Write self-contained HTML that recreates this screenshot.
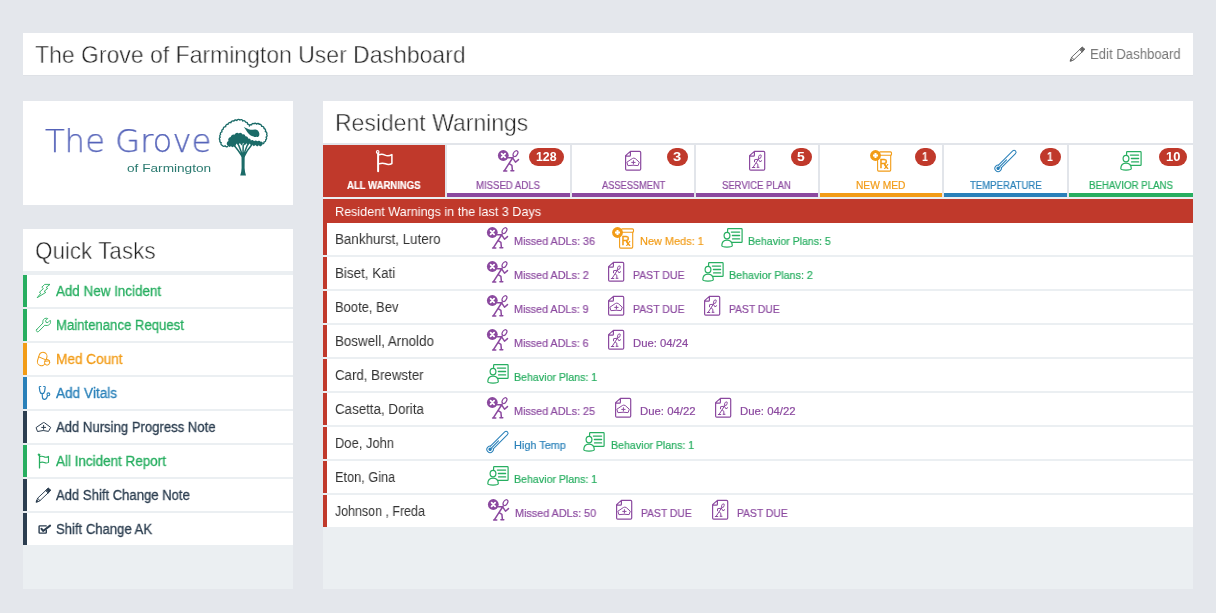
<!DOCTYPE html>
<html lang="en"><head><meta charset="utf-8"><title>The Grove of Farmington User Dashboard</title>
<style>
*{box-sizing:border-box;margin:0;padding:0}
html,body{width:1216px;height:613px;overflow:hidden}
body{background:#e4e7ec;font-family:"Liberation Sans",sans-serif;position:relative;color:#333}
.b{position:absolute}
.t{position:absolute;white-space:nowrap;line-height:1;transform-origin:0 0;display:block;will-change:transform}
.light{-webkit-text-stroke:0.5px #fff}
.med{-webkit-text-stroke:0.3px currentColor}
.wt,.tab{-webkit-text-stroke:0.2px currentColor}
.logo1{font-family:'DejaVu Sans',sans-serif;-webkit-text-stroke:0.25px currentColor}
svg.i{position:absolute;overflow:visible;will-change:transform}
</style></head><body>

<div class="b" style="left:23px;top:33px;width:1170px;height:42px;background:#fff;box-shadow:0 1px 0 rgba(0,0,0,.025)"></div>
<div class="b" style="left:23px;top:101px;width:270px;height:104px;background:#fff;"></div>
<div class="b" style="left:23px;top:229px;width:270px;height:360px;background:#ebeff2;"></div>
<div class="b" style="left:23px;top:229px;width:270px;height:42px;background:#fff;"></div>
<div class="b" style="left:23px;top:275px;width:270px;height:32px;background:#fff;border-left:4px solid #27ae60"></div>
<div class="b" style="left:23px;top:309px;width:270px;height:32px;background:#fff;border-left:4px solid #27ae60"></div>
<div class="b" style="left:23px;top:343px;width:270px;height:32px;background:#fff;border-left:4px solid #f29c17"></div>
<div class="b" style="left:23px;top:377px;width:270px;height:32px;background:#fff;border-left:4px solid #2980b9"></div>
<div class="b" style="left:23px;top:411px;width:270px;height:32px;background:#fff;border-left:4px solid #2c3e50"></div>
<div class="b" style="left:23px;top:445px;width:270px;height:32px;background:#fff;border-left:4px solid #27ae60"></div>
<div class="b" style="left:23px;top:479px;width:270px;height:32px;background:#fff;border-left:4px solid #2c3e50"></div>
<div class="b" style="left:23px;top:513px;width:270px;height:32px;background:#fff;border-left:4px solid #2c3e50"></div>
<div class="b" style="left:323px;top:101px;width:870px;height:488px;background:#ebeff2;"></div>
<div class="b" style="left:323px;top:101px;width:870px;height:42px;background:#fff;"></div>
<div class="b" style="left:323px;top:145px;width:122px;height:52px;background:#c0392b;"></div>
<div class="b" style="left:447px;top:145px;width:123px;height:52px;background:#fff;border-bottom:4px solid #8b499f"></div>
<div class="b" style="left:572px;top:145px;width:122px;height:52px;background:#fff;border-bottom:4px solid #8b499f"></div>
<div class="b" style="left:696px;top:145px;width:122px;height:52px;background:#fff;border-bottom:4px solid #8b499f"></div>
<div class="b" style="left:820px;top:145px;width:122px;height:52px;background:#fff;border-bottom:4px solid #f29c17"></div>
<div class="b" style="left:944px;top:145px;width:123px;height:52px;background:#fff;border-bottom:4px solid #2980b9"></div>
<div class="b" style="left:1069px;top:145px;width:124px;height:52px;background:#fff;border-bottom:4px solid #27ae60"></div>
<div class="b" style="left:323px;top:143px;width:870px;height:2px;background:#e2e5ea;"></div>
<div class="b" style="left:445px;top:145px;width:2px;height:52px;background:#e2e5ea;"></div>
<div class="b" style="left:570px;top:145px;width:2px;height:52px;background:#e2e5ea;"></div>
<div class="b" style="left:694px;top:145px;width:2px;height:52px;background:#e2e5ea;"></div>
<div class="b" style="left:818px;top:145px;width:2px;height:52px;background:#e2e5ea;"></div>
<div class="b" style="left:942px;top:145px;width:2px;height:52px;background:#e2e5ea;"></div>
<div class="b" style="left:1067px;top:145px;width:2px;height:52px;background:#e2e5ea;"></div>
<div class="b" style="left:323px;top:199px;width:870px;height:24px;background:#c0392b;"></div>
<div class="b" style="left:323px;top:223px;width:870px;height:32px;background:#fff;border-left:4px solid #c0392b"></div>
<div class="b" style="left:323px;top:257px;width:870px;height:32px;background:#fff;border-left:4px solid #c0392b"></div>
<div class="b" style="left:323px;top:291px;width:870px;height:32px;background:#fff;border-left:4px solid #c0392b"></div>
<div class="b" style="left:323px;top:325px;width:870px;height:32px;background:#fff;border-left:4px solid #c0392b"></div>
<div class="b" style="left:323px;top:359px;width:870px;height:32px;background:#fff;border-left:4px solid #c0392b"></div>
<div class="b" style="left:323px;top:393px;width:870px;height:32px;background:#fff;border-left:4px solid #c0392b"></div>
<div class="b" style="left:323px;top:427px;width:870px;height:32px;background:#fff;border-left:4px solid #c0392b"></div>
<div class="b" style="left:323px;top:461px;width:870px;height:32px;background:#fff;border-left:4px solid #c0392b"></div>
<div class="b" style="left:323px;top:495px;width:870px;height:32px;background:#fff;border-left:4px solid #c0392b"></div>
<div class="b" style="left:529px;top:148px;width:35px;height:18px;background:#c0392b;border-radius:9px"></div>
<div class="b" style="left:667px;top:148px;width:21px;height:18px;background:#c0392b;border-radius:9px"></div>
<div class="b" style="left:791px;top:148px;width:21px;height:18px;background:#c0392b;border-radius:9px"></div>
<div class="b" style="left:915px;top:148px;width:21px;height:18px;background:#c0392b;border-radius:9px"></div>
<div class="b" style="left:1040px;top:148px;width:21px;height:18px;background:#c0392b;border-radius:9px"></div>
<div class="b" style="left:1159px;top:148px;width:28px;height:18px;background:#c0392b;border-radius:9px"></div>
<span class="t light" style="left:35.00px;top:43.00px;font-size:24px;color:#1e1e1e;transform:scaleX(0.9579)">The Grove of Farmington User Dashboard</span>
<span class="t" style="left:1090.00px;top:47.00px;font-size:14px;color:#777;transform:scaleX(0.9390)">Edit Dashboard</span>
<span class="t light" style="left:335.00px;top:111.00px;font-size:24px;color:#1e1e1e;transform:scaleX(0.9574)">Resident Warnings</span>
<span class="t light" style="left:35.00px;top:239.00px;font-size:24px;color:#1e1e1e;transform:scaleX(0.9347)">Quick Tasks</span>
<span class="t logo1" style="left:45.00px;top:125.00px;font-size:32.5px;color:#5563b9;font-weight:200;transform:scaleX(0.9914)">The Grove</span>
<span class="t logo2" style="left:127.00px;top:163.00px;font-size:11.5px;color:#2b7a70;transform:scaleX(1.1864)">of Farmington</span>
<span class="t med" style="left:56.00px;top:284.00px;font-size:14px;color:#27ae60;transform:scaleX(0.9580)">Add New Incident</span>
<span class="t med" style="left:56.00px;top:318.00px;font-size:14px;color:#27ae60;transform:scaleX(0.9388)">Maintenance Request</span>
<span class="t med" style="left:56.00px;top:352.00px;font-size:14px;color:#f29c17;transform:scaleX(0.9723)">Med Count</span>
<span class="t med" style="left:56.00px;top:386.00px;font-size:14px;color:#2980b9;transform:scaleX(0.9727)">Add Vitals</span>
<span class="t med" style="left:56.00px;top:420.00px;font-size:14px;color:#2c3e50;transform:scaleX(0.9361)">Add Nursing Progress Note</span>
<span class="t med" style="left:56.00px;top:454.00px;font-size:14px;color:#27ae60;transform:scaleX(0.9614)">All Incident Report</span>
<span class="t med" style="left:56.00px;top:488.00px;font-size:14px;color:#2c3e50;transform:scaleX(0.9340)">Add Shift Change Note</span>
<span class="t med" style="left:56.00px;top:522.00px;font-size:14px;color:#2c3e50;transform:scaleX(0.9350)">Shift Change AK</span>
<span class="t" style="left:335.00px;top:205.00px;font-size:13px;color:#fff;transform:scaleX(0.9685)">Resident Warnings in the last 3 Days</span>
<span class="t" style="left:335.00px;top:232.00px;font-size:14px;color:#333;transform:scaleX(0.9558)">Bankhurst, Lutero</span>
<span class="t wt" style="left:514.00px;top:236.00px;font-size:11px;color:#8b499f;transform:scaleX(0.9809)">Missed ADLs: 36</span>
<span class="t wt" style="left:640.00px;top:236.00px;font-size:11px;color:#f29c17;transform:scaleX(0.9936)">New Meds: 1</span>
<span class="t wt" style="left:748.00px;top:236.00px;font-size:11px;color:#27ae60;transform:scaleX(0.9605)">Behavior Plans: 5</span>
<span class="t" style="left:335.00px;top:266.00px;font-size:14px;color:#333;transform:scaleX(0.9553)">Biset, Kati</span>
<span class="t wt" style="left:514.00px;top:270.00px;font-size:11px;color:#8b499f;transform:scaleX(0.9797)">Missed ADLs: 2</span>
<span class="t wt" style="left:633.00px;top:270.00px;font-size:11px;color:#8b499f;transform:scaleX(0.9527)">PAST DUE</span>
<span class="t wt" style="left:729.00px;top:270.00px;font-size:11px;color:#27ae60;transform:scaleX(0.9726)">Behavior Plans: 2</span>
<span class="t" style="left:335.00px;top:300.00px;font-size:14px;color:#333;transform:scaleX(0.9270)">Boote, Bev</span>
<span class="t wt" style="left:514.00px;top:304.00px;font-size:11px;color:#8b499f;transform:scaleX(0.9769)">Missed ADLs: 9</span>
<span class="t wt" style="left:633.00px;top:304.00px;font-size:11px;color:#8b499f;transform:scaleX(0.9527)">PAST DUE</span>
<span class="t wt" style="left:729.00px;top:304.00px;font-size:11px;color:#8b499f;transform:scaleX(0.9380)">PAST DUE</span>
<span class="t" style="left:335.00px;top:334.00px;font-size:14px;color:#333;transform:scaleX(0.9557)">Boswell, Arnoldo</span>
<span class="t wt" style="left:514.00px;top:338.00px;font-size:11px;color:#8b499f;transform:scaleX(0.9770)">Missed ADLs: 6</span>
<span class="t wt" style="left:633.00px;top:338.00px;font-size:11px;color:#8b499f;transform:scaleX(1.0273)">Due: 04/24</span>
<span class="t" style="left:335.00px;top:368.00px;font-size:14px;color:#333;transform:scaleX(0.9484)">Card, Brewster</span>
<span class="t wt" style="left:514.00px;top:372.00px;font-size:11px;color:#27ae60;transform:scaleX(0.9655)">Behavior Plans: 1</span>
<span class="t" style="left:335.00px;top:402.00px;font-size:14px;color:#333;transform:scaleX(0.9519)">Casetta, Dorita</span>
<span class="t wt" style="left:514.00px;top:406.00px;font-size:11px;color:#8b499f;transform:scaleX(0.9809)">Missed ADLs: 25</span>
<span class="t wt" style="left:640.00px;top:406.00px;font-size:11px;color:#8b499f;transform:scaleX(1.0322)">Due: 04/22</span>
<span class="t wt" style="left:740.00px;top:406.00px;font-size:11px;color:#8b499f;transform:scaleX(1.0322)">Due: 04/22</span>
<span class="t" style="left:335.00px;top:436.00px;font-size:14px;color:#333;transform:scaleX(0.9244)">Doe, John</span>
<span class="t wt" style="left:514.00px;top:440.00px;font-size:11px;color:#2980b9;transform:scaleX(0.9896)">High Temp</span>
<span class="t wt" style="left:611.00px;top:440.00px;font-size:11px;color:#27ae60;transform:scaleX(0.9655)">Behavior Plans: 1</span>
<span class="t" style="left:335.00px;top:470.00px;font-size:14px;color:#333;transform:scaleX(0.9110)">Eton, Gina</span>
<span class="t wt" style="left:514.00px;top:474.00px;font-size:11px;color:#27ae60;transform:scaleX(0.9655)">Behavior Plans: 1</span>
<span class="t" style="left:335.00px;top:504.00px;font-size:14px;color:#333;transform:scaleX(0.8881)">Johnson , Freda</span>
<span class="t wt" style="left:515.00px;top:508.00px;font-size:11px;color:#8b499f;transform:scaleX(0.9822)">Missed ADLs: 50</span>
<span class="t wt" style="left:641.00px;top:508.00px;font-size:11px;color:#8b499f;transform:scaleX(0.9380)">PAST DUE</span>
<span class="t wt" style="left:737.00px;top:508.00px;font-size:11px;color:#8b499f;transform:scaleX(0.9380)">PAST DUE</span>
<span class="t tab" style="left:347.00px;top:181.00px;font-size:10px;color:#fff;font-weight:700;transform:scaleX(0.9552)">ALL WARNINGS</span>
<span class="t tab" style="left:476.00px;top:181.00px;font-size:10px;color:#8b499f;transform:scaleX(0.9593)">MISSED ADLS</span>
<span class="t tab" style="left:602.00px;top:181.00px;font-size:10px;color:#8b499f;transform:scaleX(0.9268)">ASSESSMENT</span>
<span class="t tab" style="left:722.00px;top:181.00px;font-size:10px;color:#8b499f;transform:scaleX(0.9469)">SERVICE PLAN</span>
<span class="t tab" style="left:856.00px;top:181.00px;font-size:10px;color:#f29c17;transform:scaleX(1.0210)">NEW MED</span>
<span class="t tab" style="left:970.00px;top:181.00px;font-size:10px;color:#2980b9;transform:scaleX(0.9572)">TEMPERATURE</span>
<span class="t tab" style="left:1089.00px;top:181.00px;font-size:10px;color:#27ae60;transform:scaleX(0.9708)">BEHAVIOR PLANS</span>
<span class="t badge" style="left:536.00px;top:151.00px;font-size:12px;color:#fff;font-weight:700;transform:scaleX(1.0280)">128</span>
<span class="t badge" style="left:673.00px;top:151.00px;font-size:12px;color:#fff;font-weight:700;transform:scaleX(1.2285)">3</span>
<span class="t badge" style="left:797.00px;top:151.00px;font-size:12px;color:#fff;font-weight:700;transform:scaleX(1.1585)">5</span>
<span class="t badge" style="left:922.00px;top:151.00px;font-size:12px;color:#fff;font-weight:700;transform:scaleX(0.8842)">1</span>
<span class="t badge" style="left:1047.00px;top:151.00px;font-size:12px;color:#fff;font-weight:700;transform:scaleX(0.8842)">1</span>
<span class="t badge" style="left:1166.00px;top:151.00px;font-size:12px;color:#fff;font-weight:700;transform:scaleX(1.0783)">10</span>
<svg width="0" height="0" style="position:absolute"><defs>
<g id="adl" fill="none" stroke="currentColor" stroke-linecap="round" stroke-linejoin="round"><circle cx="9.3" cy="9.5" r="5.4" fill="currentColor" stroke="none"/>
<path d="M7.6 7.7 L11.1 11.4 M11.1 7.7 L7.6 11.4" stroke="#fff" stroke-width="1.8"/>
<ellipse cx="21.5" cy="7.6" rx="2" ry="3.2" transform="rotate(32 21.5 7.6)" stroke-width="1.2"/>
<path d="M14.5 11.8 H18.7 M19.2 11 L10.3 24.8 M9.6 25.1 H12.8 M18.8 12.2 L21.5 16.2 L24.5 13.6 M15.6 17.9 L17.9 19.3 L18.4 24.6 M16.9 24.7 H19.8" stroke-width="1.5"/></g>
<g id="doc" fill="none" stroke="currentColor" stroke-linecap="round" stroke-linejoin="round"><path d="M12.4 5.4 H21.6 Q22.7 5.4 22.7 6.5 V23.1 Q22.7 24.2 21.6 24.2 H8.7 Q7.6 24.2 7.6 23.1 V9.6 Z M12.4 5.4 V9.2 Q12.4 10.2 11.4 10.2 H7.7" stroke-width="1.2"/></g>
<g id="ass" fill="none" stroke="currentColor" stroke-linecap="round" stroke-linejoin="round"><use href="#doc"/><path d="M9.2 16 L14.4 12.5 Q15.8 11.7 17.2 12.5 L21.3 16.2 L20.1 19.6 Q15.2 18.9 10.3 19.6 Z M15.4 14.7 V18.1 M13.7 16.4 H17.1" stroke-width="1"/></g>
<g id="svc" fill="none" stroke="currentColor" stroke-linecap="round" stroke-linejoin="round"><use href="#doc"/><ellipse cx="17.9" cy="10.6" rx="1.2" ry="1.8" transform="rotate(25 17.9 10.6)" stroke-width="0.9"/>
<path d="M16.9 12.4 L11.2 21.2 M10.3 21.5 H12.8 M16.5 13.2 L12.6 13.7 L12.5 15.8 M16.5 13.4 L17.9 15.8 L19.7 14.7 M14.3 17 L15.8 18.2 L15.9 21.1 M15.1 21.3 H17" stroke-width="1"/></g>
<g id="med" fill="none" stroke="currentColor" stroke-linecap="round" stroke-linejoin="round"><rect x="13.4" y="5.9" width="12.1" height="3.4" rx="1" stroke-width="1.1"/>
<path d="M11.6 14 V24.1 Q11.6 25.1 12.6 25.1 H23.7 Q24.7 25.1 24.7 24.1 V9.4" stroke-width="1.1"/>
<circle cx="9.5" cy="9.5" r="5.4" fill="currentColor" stroke="none"/>
<path d="M9.5 7 V12 M7 9.5 H12" stroke="#fff" stroke-width="2" stroke-linecap="butt"/>
<text x="13.4" y="21.6" font-family="Liberation Sans,Arial,sans-serif" font-size="13.4" fill="currentColor" stroke="currentColor" stroke-width="0.55" textLength="8.2" lengthAdjust="spacingAndGlyphs">R</text>
<text x="17.7" y="22.8" font-family="Liberation Sans,Arial,sans-serif" font-size="9" font-weight="700" fill="currentColor" stroke="none">x</text></g>
<g id="temp" fill="none" stroke="currentColor" stroke-linecap="round" stroke-linejoin="round"><g transform="translate(8.1 22.3) rotate(-45)"><circle r="3.2" stroke-width="1" fill="#fff"/>
<path d="M2.5 -1.95 H22.6 a1.95 1.95 0 0 1 0 3.9 H2.5" stroke-width="1" fill="#fff"/>
<circle r="1.7" fill="currentColor" stroke="none"/><path d="M0 0 H11.8" stroke-width="1.1"/></g></g>
<g id="beh" fill="none" stroke="currentColor" stroke-linecap="round" stroke-linejoin="round"><path d="M10.6 8.6 V6.4 Q10.6 5.7 11.3 5.7 H24.4 Q25.1 5.7 25.1 6.4 V18.7 Q25.1 19.4 24.4 19.4 H15.2" stroke-width="1.2"/>
<path d="M14.4 9.1 H22.6 M15.4 12.5 H22.6 M15.6 15.9 H22.6" stroke-width="1.3"/>
<ellipse cx="10" cy="12.6" rx="2.9" ry="3.3" stroke-width="1.2"/>
<path d="M4.8 22.6 Q4.9 17.1 10 17.1 Q15.2 17.1 15.3 22.6 Q15.3 24.1 10 24.1 Q4.8 24.1 4.8 22.6 Z" stroke-width="1.2"/></g>
<g id="flagw" fill="none" stroke="currentColor" stroke-linecap="round" stroke-linejoin="round"><circle cx="8.7" cy="5.9" r="1.3" stroke-width="1.1"/><path d="M9.1 7.3 V25.3" stroke-width="2"/>
<path d="M9.8 8.9 C12.5 7.9 14 8.2 16 9.1 S20.5 9.9 22.9 8.6 V17.5 C20.5 19 18.5 18.7 16.5 17.8 S12.5 16.9 9.8 17.9" stroke-width="1.5"/></g>
<g id="bolt" fill="none" stroke="currentColor" stroke-linecap="round" stroke-linejoin="round"><path d="M12.1 3.4 H17 L13.1 6.5 L14.7 7.4 L11.1 10.4 L12.8 11.4 L4.2 16.7 L7.8 12.2 L6.4 11.3 L10.4 7.6 L9.1 6.5 Z" stroke-width="0.9"/></g>
<g id="wrench" fill="none" stroke="currentColor" stroke-linecap="round" stroke-linejoin="round"><path d="M3.9 14.3 L10 8 C9.6 6.3 9.9 4.6 11.6 3.6 C12.6 3.1 13.8 3.1 14.7 3.5 L12.6 5.6 L13 7.3 L14.9 7.6 L17.2 5.3 C17.9 6.7 17.6 8.3 16.5 9.4 C15.2 10.6 13.4 10.8 11.8 10.2 L5.8 16.3 C4.9 17.1 3.9 16.9 3.5 16.1 C3.2 15.5 3.4 14.8 3.9 14.3 Z" stroke-width="0.9"/></g>
<g id="pills" fill="none" stroke="currentColor" stroke-linecap="round" stroke-linejoin="round"><rect x="5.2" y="3.2" width="8" height="13.6" rx="4" transform="rotate(17 9.2 10)" stroke-width="1"/>
<path d="M5.8 7.9 L12.7 10.8" stroke-width="1"/><ellipse cx="14.1" cy="13.3" rx="2.6" ry="2.9" fill="#fff" stroke-width="1"/><path d="M12 12.3 L16.5 11.8" stroke-width="1"/></g>
<g id="steth" fill="none" stroke="currentColor" stroke-linecap="round" stroke-linejoin="round"><path d="M7.7 3.5 H6.9 Q6.2 3.6 6.3 4.4 L6.9 8.3 Q7.3 10.5 9.2 10.5 Q11.2 10.5 11.6 8.3 L12.2 4.4 Q12.3 3.6 11.6 3.5 H10.7 M9.2 10.5 L9.4 14 Q9.5 16.3 11.4 16.3 Q13.5 16.3 14.1 13.9 L14.5 12.8" stroke-width="1.2"/><circle cx="15.4" cy="11.3" r="1.4" stroke-width="1.1"/></g>
<g id="nurse" fill="none" stroke="currentColor" stroke-linecap="round" stroke-linejoin="round"><path d="M3.4 10.4 L10.2 5.7 Q10.8 5.3 11.4 5.7 L17.7 10.4 L15.5 14.4 Q10.3 12.6 4.9 14.4 Z M10.6 8.4 V12.3 M8.7 10.4 H12.6" stroke-width="1"/></g>
<g id="flag" fill="none" stroke="currentColor" stroke-linecap="round" stroke-linejoin="round"><circle cx="5.9" cy="3.7" r="0.9" fill="currentColor" stroke-width="0.6"/><path d="M6.5 4 V16.9" stroke-width="1.3"/>
<path d="M6.9 5.6 C8.7 4.9 9.7 5.1 11 5.8 S13.9 6.3 15.5 5.4 V11.4 C13.9 12.4 12.6 12.2 11.3 11.6 S8.7 10.9 6.9 11.6" stroke-width="1.1"/></g>
<g id="pencil" fill="none" stroke="currentColor" stroke-linecap="round" stroke-linejoin="round"><g transform="translate(3.3 16.8) rotate(-43.5)"><path d="M0 0 L3.4 -1.7 H17.4 Q18.3 -1.7 18.3 -0.8 V0.8 Q18.3 1.7 17.4 1.7 H3.4 Z M3.4 -1.7 V1.7 M14.6 -1.7 V1.7" stroke-width="0.9"/>
<path d="M0 0 L1.6 -0.8 V0.8 Z M15.4 -1.7 H17.4 Q18.3 -1.7 18.3 -0.8 V0.8 Q18.3 1.7 17.4 1.7 H15.4 Z" fill="currentColor" stroke-width="0.8"/></g></g>
<g id="check" fill="none" stroke="currentColor" stroke-linecap="round" stroke-linejoin="round"><path d="M13.2 6.9 H6.8 Q6.1 6.9 6.1 7.6 V13.4 Q6.1 14.1 6.8 14.1 H12.6 Q13.3 14.1 13.3 13.4 V11.3" stroke-width="1.4"/><path d="M8.4 9.7 L10.1 12 L17.1 6.6" stroke-width="2"/></g>
</defs></svg>
<svg class="i" style="left:483px;top:223px;color:#8b499f" width="30" height="30" viewBox="0 0 30 30"><use href="#adl"/></svg>
<svg class="i" style="left:608px;top:223px;color:#f29c17" width="30" height="30" viewBox="0 0 30 30"><use href="#med"/></svg>
<svg class="i" style="left:716.5px;top:223px;color:#27ae60" width="30" height="30" viewBox="0 0 30 30"><use href="#beh"/></svg>
<svg class="i" style="left:483px;top:257px;color:#8b499f" width="30" height="30" viewBox="0 0 30 30"><use href="#adl"/></svg>
<svg class="i" style="left:601.0px;top:257px;color:#8b499f" width="30" height="30" viewBox="0 0 30 30"><use href="#svc"/></svg>
<svg class="i" style="left:697.5px;top:257px;color:#27ae60" width="30" height="30" viewBox="0 0 30 30"><use href="#beh"/></svg>
<svg class="i" style="left:483px;top:291px;color:#8b499f" width="30" height="30" viewBox="0 0 30 30"><use href="#adl"/></svg>
<svg class="i" style="left:601.0px;top:291px;color:#8b499f" width="30" height="30" viewBox="0 0 30 30"><use href="#ass"/></svg>
<svg class="i" style="left:696.5px;top:291px;color:#8b499f" width="30" height="30" viewBox="0 0 30 30"><use href="#svc"/></svg>
<svg class="i" style="left:483px;top:325px;color:#8b499f" width="30" height="30" viewBox="0 0 30 30"><use href="#adl"/></svg>
<svg class="i" style="left:601.0px;top:325px;color:#8b499f" width="30" height="30" viewBox="0 0 30 30"><use href="#svc"/></svg>
<svg class="i" style="left:482.5px;top:359px;color:#27ae60" width="30" height="30" viewBox="0 0 30 30"><use href="#beh"/></svg>
<svg class="i" style="left:483px;top:393px;color:#8b499f" width="30" height="30" viewBox="0 0 30 30"><use href="#adl"/></svg>
<svg class="i" style="left:608.0px;top:393px;color:#8b499f" width="30" height="30" viewBox="0 0 30 30"><use href="#ass"/></svg>
<svg class="i" style="left:708.0px;top:393px;color:#8b499f" width="30" height="30" viewBox="0 0 30 30"><use href="#svc"/></svg>
<svg class="i" style="left:482px;top:427px;color:#2980b9" width="30" height="30" viewBox="0 0 30 30"><use href="#temp"/></svg>
<svg class="i" style="left:578.5px;top:427px;color:#27ae60" width="30" height="30" viewBox="0 0 30 30"><use href="#beh"/></svg>
<svg class="i" style="left:482.5px;top:461px;color:#27ae60" width="30" height="30" viewBox="0 0 30 30"><use href="#beh"/></svg>
<svg class="i" style="left:484px;top:495px;color:#8b499f" width="30" height="30" viewBox="0 0 30 30"><use href="#adl"/></svg>
<svg class="i" style="left:609.0px;top:495px;color:#8b499f" width="30" height="30" viewBox="0 0 30 30"><use href="#ass"/></svg>
<svg class="i" style="left:705.0px;top:495px;color:#8b499f" width="30" height="30" viewBox="0 0 30 30"><use href="#svc"/></svg>
<svg class="i" style="left:369px;top:146px;color:#fff" width="30" height="30" viewBox="0 0 30 30"><use href="#flagw"/></svg>
<svg class="i" style="left:494px;top:146px;color:#8b499f" width="30" height="30" viewBox="0 0 30 30"><use href="#adl"/></svg>
<svg class="i" style="left:618px;top:146px;color:#8b499f" width="30" height="30" viewBox="0 0 30 30"><use href="#ass"/></svg>
<svg class="i" style="left:742px;top:146px;color:#8b499f" width="30" height="30" viewBox="0 0 30 30"><use href="#svc"/></svg>
<svg class="i" style="left:866px;top:146px;color:#f29c17" width="30" height="30" viewBox="0 0 30 30"><use href="#med"/></svg>
<svg class="i" style="left:990px;top:146px;color:#2980b9" width="30" height="30" viewBox="0 0 30 30"><use href="#temp"/></svg>
<svg class="i" style="left:1116px;top:146px;color:#27ae60" width="30" height="30" viewBox="0 0 30 30"><use href="#beh"/></svg>
<svg class="i" style="left:33px;top:281px;color:#27ae60" width="20" height="20" viewBox="0 0 20 20"><use href="#bolt"/></svg>
<svg class="i" style="left:33px;top:315px;color:#27ae60" width="20" height="20" viewBox="0 0 20 20"><use href="#wrench"/></svg>
<svg class="i" style="left:33px;top:349px;color:#f29c17" width="20" height="20" viewBox="0 0 20 20"><use href="#pills"/></svg>
<svg class="i" style="left:33px;top:383px;color:#2980b9" width="20" height="20" viewBox="0 0 20 20"><use href="#steth"/></svg>
<svg class="i" style="left:33px;top:417px;color:#2c3e50" width="20" height="20" viewBox="0 0 20 20"><use href="#nurse"/></svg>
<svg class="i" style="left:33px;top:451px;color:#27ae60" width="20" height="20" viewBox="0 0 20 20"><use href="#flag"/></svg>
<svg class="i" style="left:33px;top:485px;color:#2c3e50" width="20" height="20" viewBox="0 0 20 20"><use href="#pencil"/></svg>
<svg class="i" style="left:33px;top:519px;color:#2c3e50" width="20" height="20" viewBox="0 0 20 20"><use href="#check"/></svg>
<svg class="i" style="left:1067px;top:44px;color:#666" width="20" height="20" viewBox="0 0 20 20"><use href="#pencil"/></svg>
<svg class="i" style="left:214px;top:114px" width="60" height="66" viewBox="0 0 60 66"><path d="M14.0 32.3 A1.74 1.74 0 0 1 11.2 31.8 A1.74 1.74 0 0 1 8.3 31.3 A1.73 1.73 0 0 1 7.2 28.6 A1.73 1.73 0 0 1 6.0 26.0 A1.66 1.66 0 0 1 6.3 23.2 A1.66 1.66 0 0 1 6.6 20.5 A1.81 1.81 0 0 1 8.0 17.8 A1.81 1.81 0 0 1 9.3 15.1 A2.02 2.02 0 0 1 11.7 12.7 A2.02 2.02 0 0 1 14.0 10.3 A2.01 2.01 0 0 1 16.9 8.7 A2.01 2.01 0 0 1 19.9 7.1 A1.83 1.83 0 0 1 22.9 6.5 A1.83 1.83 0 0 1 25.9 6.0 A1.82 1.82 0 0 1 28.8 7.0 A1.82 1.82 0 0 1 31.6 8.1 A1.63 1.63 0 0 1 33.5 10.1 A1.63 1.63 0 0 1 35.4 12.0 A1.50 1.50 0 0 1 37.6 10.9 A1.50 1.50 0 0 1 39.9 9.8 A1.63 1.63 0 0 1 42.6 10.1 A1.63 1.63 0 0 1 45.3 10.3 A1.89 1.89 0 0 1 47.6 12.4 A1.89 1.89 0 0 1 50.0 14.5 A1.96 1.96 0 0 1 51.3 17.5 A1.96 1.96 0 0 1 52.6 20.5 A1.65 1.65 0 0 1 52.1 23.2 A1.65 1.65 0 0 1 51.6 25.9 A1.49 1.49 0 0 1 50.0 27.9 A1.49 1.49 0 0 1 48.5 29.8" fill="none" stroke="#1b6b68" stroke-width="1.35" stroke-linejoin="round"/><path d="M13.5 31.5 A2.77 2.77 0 0 1 14.5 27.0 A2.74 2.74 0 0 1 16.7 23.0 A2.63 2.63 0 0 1 20.5 20.8 A2.71 2.71 0 0 1 24.8 19.4 A2.30 2.30 0 0 1 28.5 20.4 A2.03 2.03 0 0 1 31.3 22.3 A2.13 2.13 0 0 1 34.0 24.6 A2.06 2.06 0 0 1 36.8 26.6 A1.97 1.97 0 0 1 40.0 27.3 A1.98 1.98 0 0 1 43.3 27.3 A1.94 1.94 0 0 1 46.5 27.8 A1.75 1.75 0 0 1 49.0 29.3 L47.8 31.4 L46.2 32.6 L44.8 31.2 L43.2 32.5 L41.4 31 L39.8 32.2 L38.2 30.8 L37.2 31.6 L35.6 29.6 L34 31.8 L32.6 29.2 L30.6 31.6 L29.2 28.8 L27.6 31.6 L25.8 29 L24.2 31.6 L22.4 29.6 L21.2 32.6 L19.8 32.4 L18.4 33.3 L17 32.3 L15.4 33.1 Z" fill="#1b6b68"/><path d="M20.6 32 Q24.5 36.5 28.3 42.5 M24.6 31 Q26.6 36 28.7 42 M29.2 30.8 Q29 36 29.1 42 M33.4 31 Q31 36.5 29.6 42 M37.6 31 Q32.6 36.8 30 42.6" fill="none" stroke="#1b6b68" stroke-width="1.5" stroke-linecap="round"/><path d="M27.5 41 Q29.1 39.6 30.7 41 L30.6 54 Q30.9 59 32 61.5 L26.2 61.5 Q27.4 59 27.6 54 Z" fill="#1b6b68"/><path d="M29.7 12.9 C32 13.6 34 15.4 36.5 15.7 C38.5 15.9 40.6 15 42.5 15.7 C44.6 16.5 45.7 18.9 45.3 20.9 C45 22.6 43.6 23.2 42.3 22.8 C41.4 23.2 40.3 23 39.6 22.4 C37.2 22.2 35.2 20.6 33.8 18.7 C32.6 17 31.4 14.6 29.7 12.9 Z" fill="#1b6b68"/></svg>
</body></html>
